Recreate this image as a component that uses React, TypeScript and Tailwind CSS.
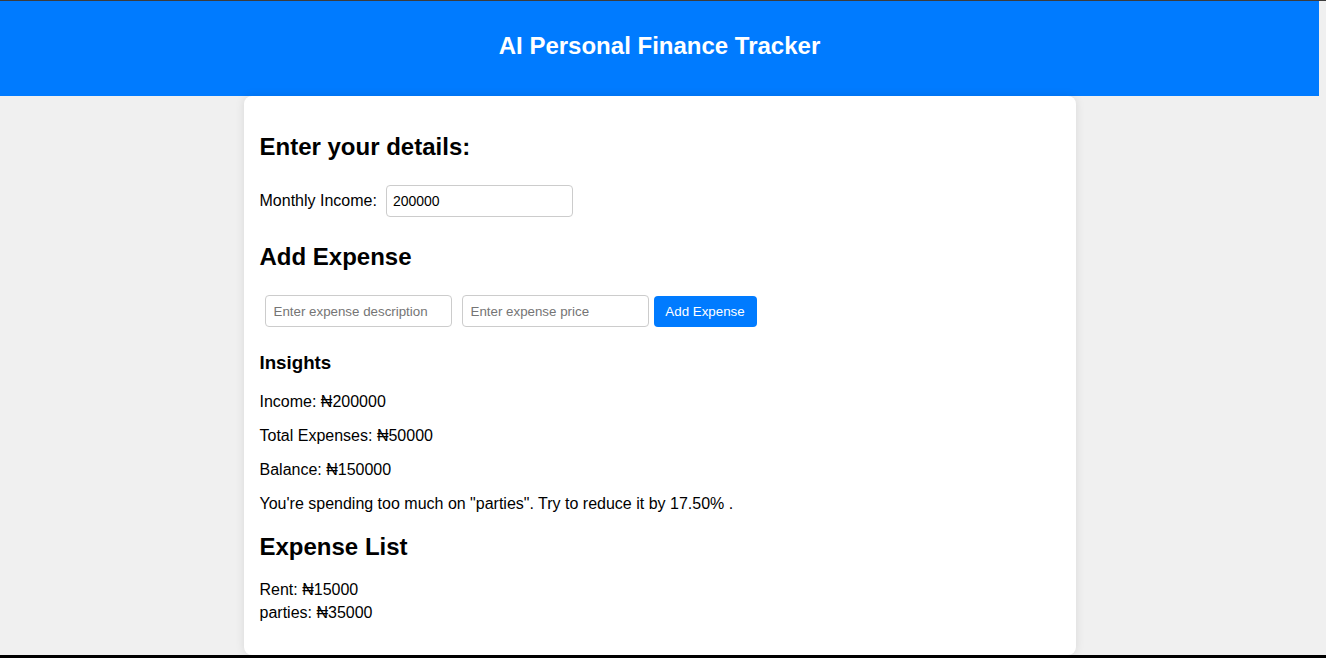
import { useState } from 'react';

interface Expense {
  description: string;
  price: number;
}

export default function App() {
  const [income, setIncome] = useState('200000');
  const [description, setDescription] = useState('');
  const [price, setPrice] = useState('');
  const [expenses, setExpenses] = useState<Expense[]>([
    { description: 'Rent', price: 15000 },
    { description: 'parties', price: 35000 },
  ]);

  const total = expenses.reduce((sum, e) => sum + e.price, 0);
  const incomeNum = Number(income) || 0;

  const addExpense = () => {
    if (!description || !price) return;
    setExpenses([...expenses, { description, price: Number(price) }]);
    setDescription('');
    setPrice('');
  };

  return (
    <div className="h-[658px] w-full overflow-hidden bg-[#f0f0f0] border-t border-t-[#3c3c3c] border-b-[3px] border-b-black font-['Liberation_Sans',Arial,sans-serif] text-black">
      <div className="w-[1319px]">
        {/* Header */}
        <header className="h-[95px] bg-[#007bff] flex items-center justify-center pb-[5px]">
          <h1 className="text-[24px] font-bold leading-[28px] text-white">AI Personal Finance Tracker</h1>
        </header>

        {/* Card */}
        <div className="mx-auto w-[832px] bg-white rounded-lg shadow-[0_0_10px_rgba(0,0,0,0.1)] px-4 pt-4 pb-[31px]">
          <h2 className="mt-[21px] text-[24px] font-bold leading-[28px]">Enter your details:</h2>

          <div className="mt-[24px] flex items-center h-[32px]">
            <label className="text-[16px] leading-[18px]">Monthly Income:</label>
            <input
              type="number"
              value={income}
              onChange={(e) => setIncome(e.target.value)}
              className="ml-[9px] w-[187px] h-[32px] px-[6px] border border-[#ccc] rounded text-[14px] text-black outline-none [appearance:textfield] [&::-webkit-inner-spin-button]:appearance-none"
            />
          </div>

          <h2 className="mt-[26px] text-[24px] font-bold leading-[28px]">Add Expense</h2>

          <div className="mt-[24px] flex items-center h-[32px]">
            <input
              type="text"
              placeholder="Enter expense description"
              value={description}
              onChange={(e) => setDescription(e.target.value)}
              className="ml-[5px] w-[187px] h-[32px] px-[8px] border border-[#ccc] rounded text-[13.33px] outline-none placeholder:text-[#757575]"
            />
            <input
              type="text"
              placeholder="Enter expense price"
              value={price}
              onChange={(e) => setPrice(e.target.value)}
              className="ml-[10px] w-[187px] h-[32px] px-[8px] border border-[#ccc] rounded text-[13.33px] outline-none placeholder:text-[#757575]"
            />
            <button
              onClick={addExpense}
              className="ml-[5px] w-[103px] h-[31px] pt-[2px] bg-[#007bff] text-white text-[13.33px] rounded"
            >
              Add Expense
            </button>
          </div>

          {/* Insights */}
          <h3 className="mt-[25px] text-[18.72px] font-bold leading-[22px]">Insights</h3>
          <p className="mt-[19px] text-[16px] leading-[18px]">Income: ₦{incomeNum}</p>
          <p className="mt-[16px] text-[16px] leading-[18px]">Total Expenses: ₦{total}</p>
          <p className="mt-[16px] text-[16px] leading-[18px]">Balance: ₦{incomeNum - total}</p>
          <p className="mt-[16px] text-[16px] leading-[18px]">
            You're spending too much on "parties". Try to reduce it by 17.50% .
          </p>

          {/* Expense List */}
          <h2 className="mt-[20px] text-[24px] font-bold leading-[28px]">Expense List</h2>
          <ul className="mt-[16.5px]">
            {expenses.map((e, i) => (
              <li key={i} className="text-[16px] leading-[23px]">
                {e.description}: ₦{e.price}
              </li>
            ))}
          </ul>
        </div>
      </div>
    </div>
  );
}
